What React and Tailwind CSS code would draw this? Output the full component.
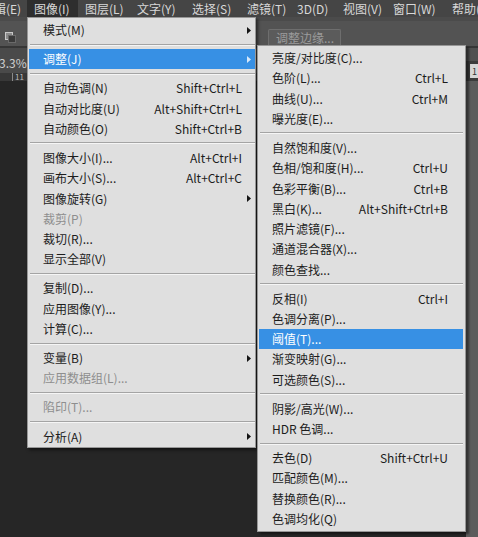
import React from "react";

const mainItems = [
  { t: "模式(M)", arrow: true },
  "sep",
  { t: "调整(J)", arrow: true, active: true },
  "sep",
  { t: "自动色调(N)", k: "Shift+Ctrl+L" },
  { t: "自动对比度(U)", k: "Alt+Shift+Ctrl+L" },
  { t: "自动颜色(O)", k: "Shift+Ctrl+B" },
  "sep",
  { t: "图像大小(I)...", k: "Alt+Ctrl+I" },
  { t: "画布大小(S)...", k: "Alt+Ctrl+C" },
  { t: "图像旋转(G)", arrow: true },
  { t: "裁剪(P)", off: true },
  { t: "裁切(R)..." },
  { t: "显示全部(V)" },
  "sep",
  { t: "复制(D)..." },
  { t: "应用图像(Y)..." },
  { t: "计算(C)..." },
  "sep",
  { t: "变量(B)", arrow: true },
  { t: "应用数据组(L)...", off: true },
  "sep",
  { t: "陷印(T)...", off: true },
  "sep",
  { t: "分析(A)", arrow: true },
];

const subItems = [
  { t: "亮度/对比度(C)..." },
  { t: "色阶(L)...", k: "Ctrl+L" },
  { t: "曲线(U)...", k: "Ctrl+M" },
  { t: "曝光度(E)..." },
  "sep",
  { t: "自然饱和度(V)..." },
  { t: "色相/饱和度(H)...", k: "Ctrl+U" },
  { t: "色彩平衡(B)...", k: "Ctrl+B" },
  { t: "黑白(K)...", k: "Alt+Shift+Ctrl+B" },
  { t: "照片滤镜(F)..." },
  { t: "通道混合器(X)..." },
  { t: "颜色查找..." },
  "sep",
  { t: "反相(I)", k: "Ctrl+I" },
  { t: "色调分离(P)..." },
  { t: "阈值(T)...", active: true },
  { t: "渐变映射(G)..." },
  { t: "可选颜色(S)..." },
  "sep",
  { t: "阴影/高光(W)..." },
  { t: "HDR 色调..." },
  "sep",
  { t: "去色(D)", k: "Shift+Ctrl+U" },
  { t: "匹配颜色(M)..." },
  { t: "替换颜色(R)..." },
  { t: "色调均化(Q)" },
];

const menuBar = [
  { t: "编辑(E)", w: "w-[52px] -ml-[25px]" },
  { t: "图像(I)", w: "w-[51px]", on: true },
  { t: "图层(L)", w: "w-[52px]" },
  { t: "文字(Y)", w: "w-[55px]" },
  { t: "选择(S)", w: "w-[55px]" },
  { t: "滤镜(T)", w: "w-[50px]" },
  { t: "3D(D)", w: "w-[46px]" },
  { t: "视图(V)", w: "w-[50px]" },
  { t: "窗口(W)", w: "w-[59px]" },
  { t: "帮助(H)", w: "w-[60px]" },
];

function Arrow({ light }) {
  return (
    <svg width="4" height="7" viewBox="0 0 4 7">
      <path d="M0 0L4 3.5L0 7Z" fill={light ? "#d6e8fa" : "#141414"} />
    </svg>
  );
}

function Sep({ sub }) {
  return (
    <div className={sub ? "flex h-[8.9px] flex-col justify-center mx-[2px]" : "flex h-[8.9px] flex-col justify-center ml-[2px]"}>
      <div className="h-px bg-[#a4a4a4]" />
      <div className="h-px bg-[#f5f5f5]" />
    </div>
  );
}

function textColor(item) {
  if (item.active) return "text-white";
  if (item.off) return "text-[#8e8e8e]";
  return "text-[#1c1c1c]";
}

function MainRow({ item }) {
  return (
    <div className={`ml-px flex h-[20.25px] items-center pl-[14px] ${item.active ? "bg-[#3790e4]" : ""}`}>
      <span className={`flex-1 ${textColor(item)}`}>{item.t}</span>
      {item.k && <span className={textColor(item)}>{item.k}</span>}
      <span className="flex w-[13px] pl-[5px]">{item.arrow && <Arrow light={item.active} />}</span>
    </div>
  );
}

function SubRow({ item }) {
  return (
    <div className={`ml-px mr-[2px] flex h-[20.25px] items-center pl-[13px] pr-[15px] ${item.active ? "bg-[#3790e4]" : ""}`}>
      <span className={`flex-1 ${textColor(item)}`}>{item.t}</span>
      {item.k && <span className={textColor(item)}>{item.k}</span>}
    </div>
  );
}

export default function App() {
  return (
    <div className="relative flex h-[537px] w-[478px] flex-col overflow-hidden bg-[#262626] text-[12px] leading-none font-['Noto_Sans_CJK_SC','Liberation_Sans',sans-serif]">
      {/* menu bar */}
      <div className="flex h-[17px] shrink-0 items-stretch bg-[#454545] text-[#d8d8d8]">
        {menuBar.map((m) => (
          <div key={m.t} className={`${m.w} flex shrink-0 items-center whitespace-nowrap pl-[7px] ${m.on ? "bg-[#2e2e2e]" : ""}`}>
            {m.t}
          </div>
        ))}
      </div>

      {/* options bar */}
      <div className="flex h-[29px] shrink-0 items-end border-t-[4px] border-[#4b4b4b] bg-[#535353]">
        <div className="mb-[3px] ml-[5px] flex h-[12px] w-[12px] items-center">
          <svg width="11" height="11" viewBox="0 0 11 11">
            <rect x="0.5" y="0.5" width="7" height="7" fill="#8a8a8a" stroke="#c8c8c8" />
            <rect x="3.5" y="3.5" width="7" height="7" fill="#3a3a3a" stroke="#6a6a6a" />
          </svg>
        </div>
        <div className="ml-[251px] flex h-[17px] w-[73px] items-center rounded-t-[2px] border border-b-0 border-[#6e6e6e] bg-[#5b5b5b] pl-[7px] text-[#9c9c9c]">
          调整边缘...
        </div>
      </div>
      <div className="h-[2px] shrink-0 bg-[#363636]" />

      <div className="flex flex-1">
        <div className="flex flex-1 flex-col">
          <div className="flex h-[25px] items-end bg-[#4a4a4a] pb-[4px]">
            <span className="-ml-[1px] text-[#cfcfcf]">3.3%</span>
          </div>
          <div className="flex h-[8px] items-center bg-[#383838] pl-[12px] text-[8px] text-[#bbbbbb]">
            <span className="mr-[2px] h-[8px] w-px bg-[#8a8a8a]" />
            11
          </div>
          <div className="flex-1 bg-[#262626]" />
        </div>
        <div className="flex w-[12px] flex-col bg-[#5a5a5a]">
          <div className="h-[13px] bg-[#505050]" />
          <div className="flex h-[20px] items-center bg-[#3c3c3c] pl-[4px]">
            <div className="flex h-[14px] w-[8px] items-center bg-[#d6d6d6] pl-[2px] text-[9px] text-[#333]">1</div>
          </div>
          <div className="flex-1 bg-[#5c5c5c]" />
        </div>
      </div>

      {/* 图像 menu */}
      <div className="absolute left-[27px] top-[17px] w-[229px] border border-[#979797] bg-[#dfdfdf] pt-[2px] shadow-[2px_2px_3px_rgba(0,0,0,0.55)]">
        {mainItems.map((it, i) => (it === "sep" ? <Sep key={i} /> : <MainRow key={i} item={it} />))}
      </div>

      {/* 调整 submenu */}
      <div className="absolute left-[257px] top-[45px] w-[209px] border border-[#979797] bg-[#dfdfdf] pb-[2px] pt-[2px] shadow-[3px_2px_2px_rgba(0,0,0,0.45)]">
        {subItems.map((it, i) => (it === "sep" ? <Sep key={i} sub /> : <SubRow key={i} item={it} />))}
      </div>
    </div>
  );
}
